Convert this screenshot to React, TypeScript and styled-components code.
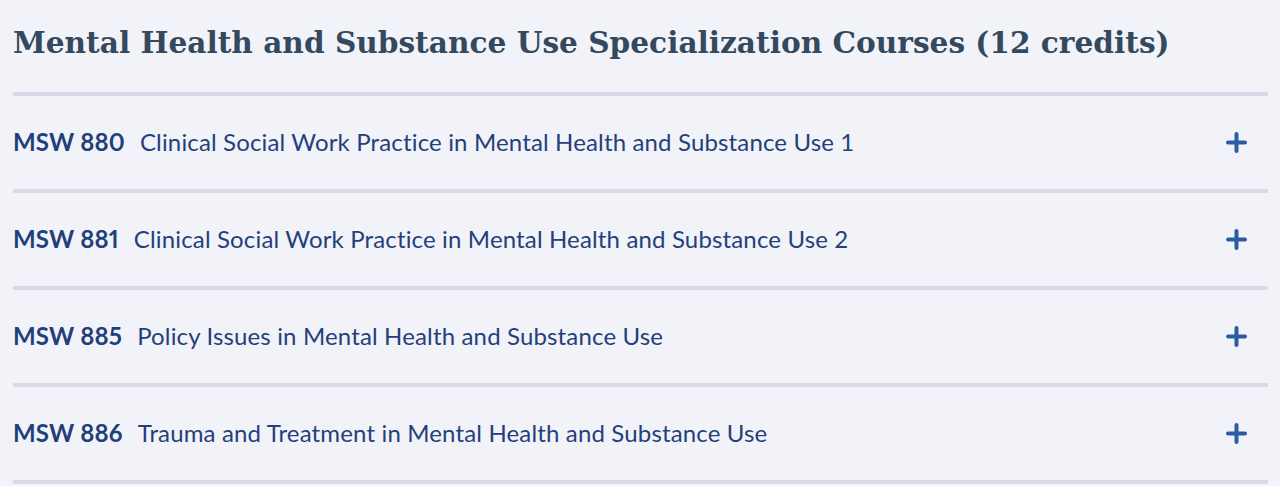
import React, { FC } from 'react';
import styled, { createGlobalStyle } from 'styled-components';

const GlobalStyle = createGlobalStyle`
  html, body {
    margin: 0;
    padding: 0;
    background: #f2f3f8;
  }
`;

const Page = styled.div`
  padding: 24px 12px 0 13px;
`;

const Heading = styled.h2`
  margin: 0 0 30px;
  font-family: 'DejaVu Serif', 'Liberation Serif', serif;
  font-weight: bold;
  font-size: 29.6px;
  line-height: 38px;
  color: #34495e;
`;

const List = styled.ul`
  list-style: none;
  margin: 0;
  padding: 0;
  border-top: 4px solid #d9d9e7;
`;

const Row = styled.li`
  display: flex;
  align-items: center;
  justify-content: space-between;
  height: 93px;
  border-bottom: 4px solid #d9d9e7;
  font-family: 'Lato', 'Noto Sans', sans-serif;
  font-size: 24px;
  letter-spacing: 0.15px;
  color: #243f7b;
  cursor: pointer;
`;

const Title = styled.div`
  display: flex;
  align-items: baseline;
  gap: 15px;
  padding-bottom: 2px;
`;

const Code = styled.strong`
  font-weight: 700;
  font-variant-numeric: proportional-nums;
  color: #213f7a;
`;

const Name = styled.span`
  font-weight: 400;
`;

const PlusIcon = styled.svg`
  width: 21px;
  height: 21px;
  margin-right: 21px;
  stroke: #2a5ca6;
  stroke-width: 4;
  stroke-linecap: round;
`;

interface ICourse {
  code: string;
  name: string;
}

const courses: ICourse[] = [
  { code: 'MSW 880', name: 'Clinical Social Work Practice in Mental Health and Substance Use 1' },
  { code: 'MSW 881', name: 'Clinical Social Work Practice in Mental Health and Substance Use 2' },
  { code: 'MSW 885', name: 'Policy Issues in Mental Health and Substance Use' },
  { code: 'MSW 886', name: 'Trauma and Treatment in Mental Health and Substance Use' },
];

const CourseRow: FC<ICourse> = ({ code, name }) => (
  <Row>
    <Title>
      <Code>{code}</Code>
      <Name>{name}</Name>
    </Title>
    <PlusIcon viewBox="0 0 21 21">
      <line x1="10.5" y1="2" x2="10.5" y2="19" />
      <line x1="2" y1="10.5" x2="19" y2="10.5" />
    </PlusIcon>
  </Row>
);

export default function App() {
  return (
    <Page>
      <GlobalStyle />
      <Heading>Mental Health and Substance Use Specialization Courses (12 credits)</Heading>
      <List>
        {courses.map((c) => (
          <CourseRow key={c.code} {...c} />
        ))}
      </List>
    </Page>
  );
}
